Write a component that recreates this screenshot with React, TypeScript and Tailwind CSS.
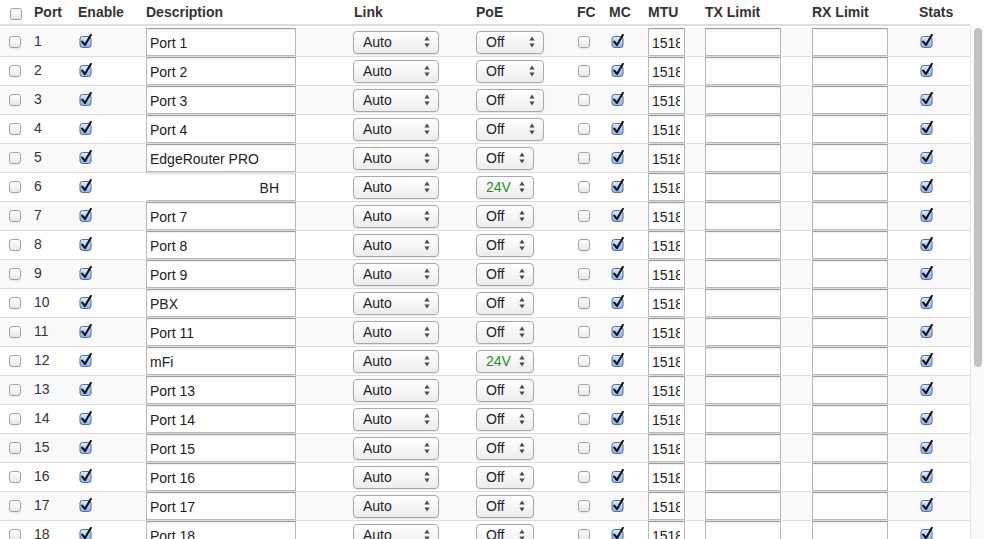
import React from 'react';

type Port = {
  id: number;
  desc: string;
  poe: 'Off' | '24V';
  wide: boolean;
};

const descs: Record<number, string> = { 5: 'EdgeRouter PRO', 6: 'BH', 10: 'PBX', 12: 'mFi' };

const ports: Port[] = Array.from({ length: 20 }, (_, i) => {
  const id = i + 1;
  return {
    id,
    desc: descs[id] ?? `Port ${id}`,
    poe: id === 6 || id === 12 ? '24V' : 'Off',
    wide: id <= 4,
  };
});

const cols = 'grid grid-cols-[30px_44px_68px_208px_122px_101px_32px_39px_57px_107px_107px_55px]';

function Box({ checked }: { checked: boolean }) {
  if (!checked) {
    return (
      <span className="block w-[12px] h-[12px] rounded-[3px] border border-[#a3a3a3] bg-gradient-to-b from-white to-[#e9e9e9] shadow-[inset_0_1px_0_#fff,0_1px_0_rgba(0,0,0,0.05)]" />
    );
  }
  return (
    <svg width="14" height="14" viewBox="0 0 14 14" className="block -mt-[2px]">
      <defs>
        <linearGradient id="cbg" x1="0" y1="0" x2="0" y2="1">
          <stop offset="0" stopColor="#dcecfd" />
          <stop offset="1" stopColor="#86b4ee" />
        </linearGradient>
      </defs>
      <rect x="1" y="2.5" width="11" height="11" rx="2.5" fill="url(#cbg)" stroke="#4f6d9c" strokeWidth="1" />
      <path d="M3.2 7.6 L6 11 L11.8 1" fill="none" stroke="#111" strokeWidth="2.1" strokeLinecap="round" strokeLinejoin="round" />
    </svg>
  );
}

function Select({ value, width, green }: { value: string; width: number; green?: boolean }) {
  return (
    <div
      className="flex items-center justify-between h-[23px] rounded-[4px] border border-[#a9a9a9] bg-gradient-to-b from-white to-[#ededed] shadow-[0_1px_1px_rgba(0,0,0,0.08)] pl-[9px] pr-[8px]"
      style={{ width }}
    >
      <span className={green ? 'text-[#1f8f1f]' : 'text-[#222]'}>{value}</span>
      <svg width="6" height="12" viewBox="0 0 6 12">
        <path d="M3 0.5 L5.6 4.5 L0.4 4.5 Z" fill="#4a4a4a" />
        <path d="M3 11.5 L5.6 7.5 L0.4 7.5 Z" fill="#4a4a4a" />
      </svg>
    </div>
  );
}

const inputCls =
  'h-[28px] border border-[#b8b8b8] border-t-[#9d9d9d] bg-white shadow-[inset_0_1px_1px_rgba(0,0,0,0.06)] text-[14px] text-[#222] outline-none font-["Liberation_Sans",Arial,sans-serif]';

function Row({ p }: { p: Port }) {
  const odd = p.id % 2 === 1;
  return (
    <div className={`${cols} h-[29px] border-b border-[#dddddd] items-center ${odd ? 'bg-[#f9f9f9]' : 'bg-white'}`}>
      <div className="pl-[9px]"><Box checked={false} /></div>
      <div className="pl-[4px] leading-[20px] -mt-[2px]">{p.id}</div>
      <div className="pl-[5px]"><Box checked /></div>
      <div className="pl-[4px] self-start">
        <input
          defaultValue={p.desc}
          className={`${inputCls} w-[150px] pt-[2px] ${p.id === 6 ? 'text-right pr-[16px] border-l-transparent border-t-[#e6e6e6]' : 'pl-[3px]'}`}
        />
      </div>
      <div className="pl-[3px]"><Select value="Auto" width={86} /></div>
      <div className="pl-[4px]"><Select value={p.poe} width={p.wide ? 68 : 58} green={p.poe === '24V'} /></div>
      <div className="pl-[5px]"><Box checked={false} /></div>
      <div className="pl-[6px]"><Box checked /></div>
      <div className="pl-[4px] self-start">
        <input defaultValue="1518" className={`${inputCls} w-[37px] pt-[2px] pl-[3px] pr-[4px]`} />
      </div>
      <div className="pl-[4px] self-start">
        <input defaultValue="" className={`${inputCls} w-[76px]`} />
      </div>
      <div className="pl-[4px] self-start">
        <input defaultValue="" className={`${inputCls} w-[76px]`} />
      </div>
      <div className="pl-[5px]"><Box checked /></div>
    </div>
  );
}

export default function App() {
  const heads = ['Port', 'Enable', 'Description', 'Link', 'PoE', 'FC', 'MC', 'MTU', 'TX Limit', 'RX Limit', 'Stats'];
  return (
    <div className="w-[984px] h-[539px] overflow-hidden bg-white text-[14px] text-[#333] font-['Liberation_Sans',Arial,sans-serif]">
      <div className={`${cols} w-[970px] h-[26px] border-b-2 border-[#dddddd] items-center font-bold`}>
        <div className="pl-[10px] mt-[4px]"><Box checked={false} /></div>
        {heads.map((h) => (
          <div key={h} className="pl-[4px] leading-[20px]">{h}</div>
        ))}
      </div>
      <div className="flex">
        <div className="w-[970px] pt-[2px]">
          {ports.map((p) => (
            <Row key={p.id} p={p} />
          ))}
        </div>
        <div className="w-[14px] h-[520px] bg-[#fafafa] border-l border-[#e6e6e6] pl-[3px] pt-[2px]">
          <div className="w-[8px] h-[339px] rounded-full bg-[#c1c1c1]" />
        </div>
      </div>
    </div>
  );
}
